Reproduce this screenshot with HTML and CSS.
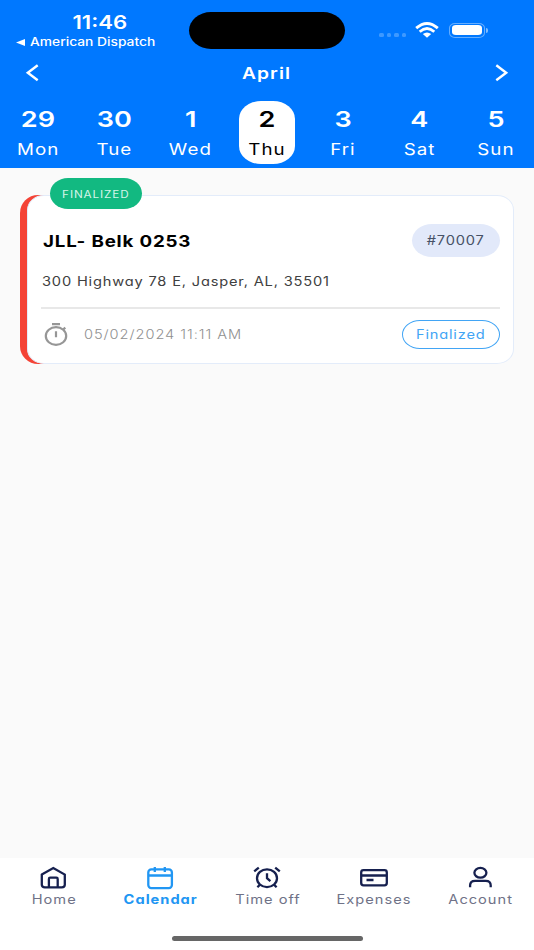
FILE: index.html
```html
<!DOCTYPE html>
<html lang="en">
<head>
<meta charset="utf-8">
<title>Calendar</title>
<link rel="stylesheet" href="styles.css">
</head>
<body>
<div class="screen">
  <header class="header">
    <div class="status">
      <div class="status-left">
        <span class="wide clock">11:46</span>
        <div class="back-app">
          <svg class="back-arrow" viewBox="0 0 9 7"><path d="M9 0v7L0 3.5z"/></svg>
          <span class="wide back-label">American Dispatch</span>
        </div>
      </div>
      <div class="island"></div>
      <div class="status-right">
        <div class="dots"><i></i><i></i><i></i><i></i></div>
        <svg class="wifi" viewBox="0 0 24 15" preserveAspectRatio="none">
          <path d="M1.2 5.2Q12-4.2 22.8 5.2" stroke-width="2.9"/>
          <path d="M4.7 8.7Q12 2.3 19.3 8.7" stroke-width="2.8"/>
          <path class="solid" d="M7.8 11.1Q12 7.9 16.2 11.1L12 14.8z"/>
        </svg>
        <div class="battery"><div class="battery-body"><b></b></div><span class="battery-tip"></span></div>
      </div>
    </div>
    <div class="month">
      <svg class="chevron" viewBox="0 0 13 17"><path d="M11.7 .3L1.8 7.8l9.9 7.5"/></svg>
      <span class="wide month-name">April</span>
      <svg class="chevron" viewBox="0 0 13 17"><path d="M1.3 .3l9.9 7.5-9.9 7.5"/></svg>
    </div>
    <div class="week">
      <div class="day"><span class="wide num">29</span><span class="wide name">Mon</span></div>
      <div class="day"><span class="wide num">30</span><span class="wide name">Tue</span></div>
      <div class="day"><span class="wide num">1</span><span class="wide name">Wed</span></div>
      <div class="day selected"><span class="wide num">2</span><span class="wide name">Thu</span></div>
      <div class="day"><span class="wide num">3</span><span class="wide name">Fri</span></div>
      <div class="day"><span class="wide num">4</span><span class="wide name">Sat</span></div>
      <div class="day"><span class="wide num">5</span><span class="wide name">Sun</span></div>
    </div>
  </header>

  <main class="content">
    <article class="card">
      <div class="tag"><span class="wide tag-text">FINALIZED</span></div>
      <div class="card-body">
        <div class="row title-row">
          <span class="wide left title">JLL- Belk 0253</span>
          <span class="pill number"><span class="wide">#70007</span></span>
        </div>
        <div class="address"><span class="wide left">300 Highway 78 E, Jasper, AL, 35501</span></div>
        <div class="row foot-row">
          <svg class="timer" viewBox="0 0 24 23" preserveAspectRatio="none">
            <ellipse cx="12" cy="13" rx="10.2" ry="8.8"/>
            <path d="M8 1.2h8M12 8.2v6M19.3 6.4l2-1.8"/>
          </svg>
          <span class="wide left date">05/02/2024 11:11 AM</span>
          <span class="pill state"><span class="wide">Finalized</span></span>
        </div>
      </div>
    </article>
  </main>

  <nav class="tabs">
    <a class="tab home">
      <svg viewBox="0 0 28 24"><path d="M2.8 8.6L14.3 2.1l11.5 6.5v10.2q0 2.5-3 2.5h-17q-3 0-3-2.5zM9.9 21.3v-8.4q0-1.2 1.3-1.2h6.2q1.3 0 1.3 1.2v8.4"/></svg>
      <span class="wide">Home</span>
    </a>
    <a class="tab calendar active">
      <svg viewBox="0 0 28 24"><rect x="2.3" y="3.4" width="23.6" height="18.7" rx="3"/><path d="M2.3 9.5h23.6M8.8 1v5M18.8 1v5"/></svg>
      <span class="wide">Calendar</span>
    </a>
    <a class="tab timeoff">
      <svg viewBox="0 0 28 24"><ellipse cx="14" cy="12.2" rx="10" ry="8.9"/><path d="M14 7.2v5l3.4 3M1.2 5.4l4.6-3.8M26.8 5.4l-4.6-3.8M7 18.6l-2.6 2.6M21 18.6l2.6 2.6"/></svg>
      <span class="wide">Time off</span>
    </a>
    <a class="tab expenses">
      <svg viewBox="0 0 28 24"><rect x="1.2" y="4.2" width="25.6" height="15.2" rx="2.3"/><path d="M1.2 9.5h25.6M6.5 14h7"/></svg>
      <span class="wide">Expenses</span>
    </a>
    <a class="tab account">
      <svg viewBox="0 0 28 24"><ellipse cx="13.4" cy="6.8" rx="6" ry="4.9"/><path d="M3.1 21.3v-2q0-4.5 5-4.5h10.6q5 0 5 4.5v2"/></svg>
      <span class="wide">Account</span>
    </a>
  </nav>
  <div class="home-indicator"></div>
</div>
</body>
</html>
```

FILE: styles.css
```css
* { box-sizing: border-box; }
body {
  margin: 0;
  font-family: Inter, "Liberation Sans", sans-serif;
  background: #fafafa;
}
.screen {
  display: flex;
  flex-direction: column;
  width: 534px;
  height: 950px;
  overflow: hidden;
  background: #fafafa;
}
svg { display: block; fill: none; overflow: visible; }

/* Stretched lettering */
.wide {
  display: inline-block;
  white-space: nowrap;
  transform: scaleX(1.2);
}
.wide.left { transform-origin: left center; }

.header { height: 168px; background: #0078ff; color: #fff; flex: none; }
.status {
  display: grid;
  grid-template-columns: 189px 156px 1fr;
  height: 52px;
}
.status-left { padding-top: 11px; }
.clock {
  display: block;
  width: max-content;
  margin-left: 77px;
  font-size: 18.5px;
  line-height: 22px;
  font-weight: 600;
}
.back-app { display: flex; align-items: center; margin: 2px 0 0 16px; height: 14px; }
.back-arrow { width: 9px; height: 7px; fill: #fff; margin-right: 5px; }
.back-label { font-size: 11.5px; font-weight: 500; transform-origin: left; }
.island { height: 37px; margin-top: 12px; background: #000; border-radius: 22px / 18.5px; }
.status-right { display: flex; align-items: center; height: 60px; padding-left: 34px; }
.dots { display: flex; gap: 3px; margin-top: 9px; }
.dots i { width: 4.5px; height: 4px; border-radius: 1.5px; background: #3e99ff; }
.wifi { width: 24px; height: 15px; margin-left: 9px; stroke: #fff; }
.wifi .solid { fill: #fff; stroke: none; }
.battery { display: flex; align-items: center; margin-left: 10px; }
.battery-body { width: 36px; height: 15px; padding: 1.5px 2px; border: 1px solid #66aeff; border-radius: 6px / 5px; }
.battery-body b { display: block; height: 10px; background: #fff; border-radius: 4px / 3px; }
.battery-tip { width: 2px; height: 5px; margin-left: 1px; background: #80bcff; border-radius: 0 2px 2px 0; }

.month { display: flex; justify-content: space-between; align-items: center; height: 42px; padding: 0 26px; }
.chevron { width: 13px; height: 17px; stroke: #fff; stroke-width: 2.4; }
.month-name { font-size: 16px; font-weight: 600; letter-spacing: .9px; }

.week { display: grid; grid-template-columns: repeat(7, 1fr); padding-top: 7px; }
.day {
  display: flex;
  flex-direction: column;
  align-items: center;
  justify-self: center;
  width: 56px;
  height: 63px;
  padding-top: 5px;
}
.num { font-size: 22px; line-height: 26px; font-weight: 600; transform: scaleX(1.23); }
.name { font-size: 16px; line-height: 20px; margin-top: 7px; letter-spacing: .9px; transform: scaleX(1.17); }
.selected { background: #fff; color: #000; border-radius: 22px / 18px; }

.content { flex: 1; padding: 27px 20px 0; }
.card { position: relative; height: 169px; padding-left: 7px; background: linear-gradient(90deg, #f44336 40px, transparent 40px); border-radius: 18px 17px 17px 18px; }
.card-body {
  height: 169px;
  padding: 28px 13px 0 14px;
  background: #fff;
  border: 1px solid #e3ecfa;
  border-radius: 17px / 15px;
  font-feature-settings: "cv11";
  font-size: 12.5px;
  letter-spacing: .7px;
}
.card .wide, .tabs .wide { transform: scaleX(1.17); }
.tag {
  position: absolute;
  left: 30px;
  top: -17px;
  display: flex;
  align-items: center;
  justify-content: center;
  width: 92px;
  height: 31px;
  border-radius: 18px / 15.5px;
  background: #12b981;
}
.tag-text { color: #d4f5e9; font-size: 10px; letter-spacing: .75px; }
.row { display: flex; align-items: center; }
.title-row { justify-content: space-between; height: 33px; }
.card .title { font-size: 16px; font-weight: 700; letter-spacing: .7px; color: #000; margin-left: 1px; }
.pill { display: flex; align-items: center; justify-content: center; }
.number { width: 88px; height: 33px; border-radius: 20px / 16.5px; background: #e2e9fa; color: #475166; }
.address { height: 52px; margin-left: -1px; padding-left: 1px; line-height: 49px; border-bottom: 2px solid #e8e8e8; color: #404040; }
.foot-row { height: 51px; color: #a0a0a0; }
.timer { width: 24px; height: 23px; margin-left: 2px; margin-top: -1px; stroke: #969696; stroke-width: 2.2; }
.date { margin-left: 16px; font-weight: 300; color: #909090; letter-spacing: .8px; }
.state { width: 98px; height: 29px; margin-left: auto; border: 1.5px solid #42a5f5; border-radius: 18px / 14.5px; color: #42a5f5; }

.tabs {
  display: grid;
  grid-template-columns: repeat(5, 1fr);
  height: 78px;
  padding-top: 8px;
  background: #fff;
  font-feature-settings: "cv11";
  font-size: 12.5px;
  color: #6f7287;
}
.tab { display: flex; flex-direction: column; align-items: center; letter-spacing: .85px; }
.tab svg { width: 28px; height: 24px; stroke: #16204f; stroke-width: 2.3; }
.tab span { line-height: 18px; margin: 1px 0 0 1px; }
.active { color: #2196f3; font-weight: 700; }
.tab.active svg { stroke: #2196f3; }
.home-indicator { height: 14px; background: #fff; }
.home-indicator::before { content: ""; display: block; width: 191px; height: 5px; margin: 0 auto; background: #666; border-radius: 3px; }
```
